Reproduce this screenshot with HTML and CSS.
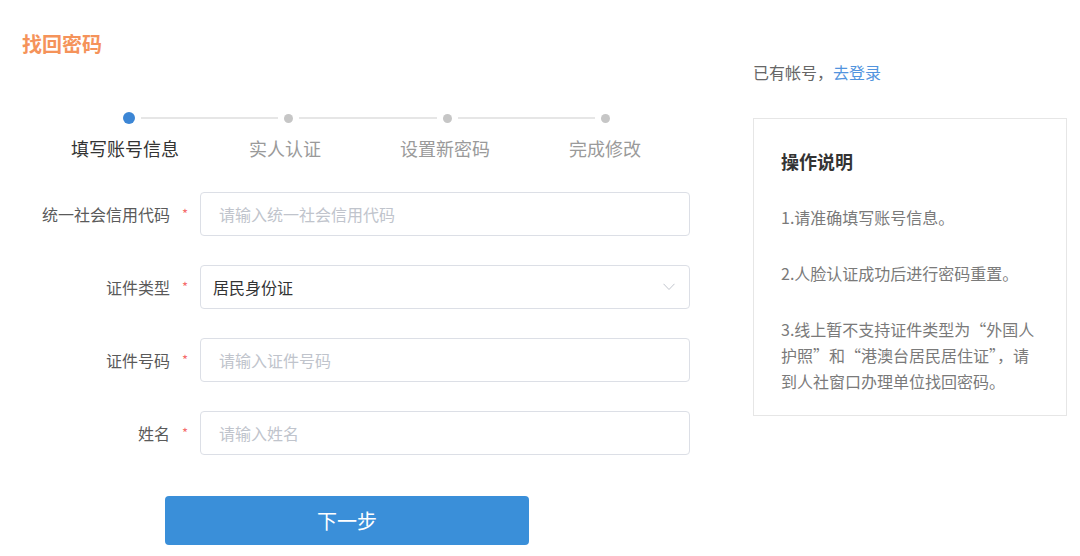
FILE: index.html
```html
<!DOCTYPE html>
<html lang="zh-CN">
<head>
<meta charset="utf-8">
<title>找回密码</title>
<link rel="stylesheet" href="styles.css">
</head>
<body>
<div class="page">
  <div class="main">
    <h1 class="title">找回密码</h1>
    <div class="track">
      <span class="dot dot-active"></span>
      <span class="line"></span>
      <span class="dot"></span>
      <span class="line"></span>
      <span class="dot"></span>
      <span class="line"></span>
      <span class="dot"></span>
    </div>
    <div class="step-labels">
      <span class="step-label active">填写账号信息</span>
      <span class="step-label">实人认证</span>
      <span class="step-label">设置新密码</span>
      <span class="step-label">完成修改</span>
    </div>
    <form class="form">
      <div class="row">
        <label class="label">统一社会信用代码<span class="req">*</span></label>
        <input class="field" type="text" placeholder="请输入统一社会信用代码">
      </div>
      <div class="row">
        <label class="label">证件类型<span class="req">*</span></label>
        <div class="field select">
          <span class="select-value">居民身份证</span>
          <svg class="chevron" width="12" height="8" viewBox="0 0 12 8"><path d="M0.5 0.8 L6 6.5 L11.5 0.8" fill="none" stroke="#c0c4cc" stroke-width="1"/></svg>
        </div>
      </div>
      <div class="row">
        <label class="label">证件号码<span class="req">*</span></label>
        <input class="field" type="text" placeholder="请输入证件号码">
      </div>
      <div class="row">
        <label class="label">姓名<span class="req">*</span></label>
        <input class="field" type="text" placeholder="请输入姓名">
      </div>
      <button class="btn" type="button">下一步</button>
    </form>
  </div>
  <aside class="side">
    <p class="login">已有帐号，<a class="link" href="#">去登录</a></p>
    <div class="guide">
      <h2 class="guide-title">操作说明</h2>
      <p class="guide-item">1.请准确填写账号信息。</p>
      <p class="guide-item">2.人脸认证成功后进行密码重置。</p>
      <p class="guide-item">3.线上暂不支持证件类型为“外国人护照”和“港澳台居民居住证”，请到人社窗口办理单位找回密码。</p>
    </div>
  </aside>
</div>
</body>
</html>
```

FILE: styles.css
```css
* { box-sizing: border-box; }
html, body {
  margin: 0;
  padding: 0;
  background: #fff;
}
body {
  font-family: "Noto Sans CJK SC", "Noto Sans", "Liberation Sans", sans-serif;
  color: #333;
}
.page {
  display: flex;
  width: 1080px;
  height: 556px;
  overflow: hidden;
}
.main {
  width: 753px;
  flex: none;
  padding-top: 30px;
}
.title {
  margin: 0 0 0 22px;
  font-size: 20px;
  line-height: 28px;
  font-weight: 700;
  color: #f5935a;
}
.track {
  display: flex;
  align-items: center;
  margin: 54px 0 0 123px;
  width: 487px;
  height: 12px;
}
.dot {
  flex: none;
  width: 9px;
  height: 9px;
  border-radius: 50%;
  background: #c6c6c6;
}
.dot-active {
  width: 12px;
  height: 12px;
  background: #3c86d5;
}
.line {
  flex: 1;
  height: 2px;
  margin: 0 6px;
  background: #e6e6e6;
}
.step-labels {
  display: flex;
  margin: 11px 0 0 45px;
}
.step-label {
  width: 160px;
  text-align: center;
  font-size: 18px;
  line-height: 26px;
  color: #9a9a9a;
}
.step-label.active {
  color: #333;
}
.form {
  margin: 31px 0 0 0;
  display: flex;
  flex-direction: column;
  gap: 29px;
}
.row {
  display: flex;
  align-items: center;
  height: 44px;
}
.label {
  width: 200px;
  flex: none;
  display: flex;
  justify-content: flex-end;
  align-items: center;
  padding-right: 11px;
  font-size: 16px;
  color: #5a5a5a;
  height: 44px;
}
.req {
  align-self: flex-start;
  margin-top: 15px;
  margin-left: 12px;
  width: 7px;
  font-size: 13px;
  line-height: 13px;
  color: #f56c6c;
}
.field {
  width: 490px;
  height: 44px;
  border: 1px solid #dcdfe6;
  border-radius: 4px;
  padding: 0 0 0 18px;
  font-family: inherit;
  font-size: 16px;
  color: #333;
  outline: none;
  background: #fff;
}
.field::placeholder {
  color: #c0c4cc;
}
.select {
  display: flex;
  align-items: center;
  justify-content: space-between;
  padding: 0 14px 0 12px;
}
.select-value {
  font-size: 16px;
  color: #333;
}
.chevron {
  display: block;
}
.btn {
  margin: 12px 0 0 165px;
  width: 364px;
  height: 49px;
  border: none;
  border-radius: 4px;
  background: #3a8fd9;
  color: #fff;
  font-family: inherit;
  font-size: 20px;
  cursor: pointer;
  padding: 0;
}
.side {
  width: 314px;
  flex: none;
  padding-top: 61px;
}
.login {
  margin: 0;
  font-size: 16px;
  line-height: 22px;
  color: #666;
}
.link {
  color: #5294de;
  text-decoration: none;
}
.guide {
  margin-top: 35px;
  border: 1px solid #e6e6e6;
  height: 298px;
  padding: 29px 23px 0 27px;
  display: flex;
  flex-direction: column;
  gap: 30px;
}
.guide-title {
  margin: 0;
  font-size: 18px;
  line-height: 26px;
  font-weight: 700;
  color: #333;
}
.guide-item {
  margin: 0;
  font-size: 16px;
  line-height: 26px;
  color: #7a7a7a;
}
```
